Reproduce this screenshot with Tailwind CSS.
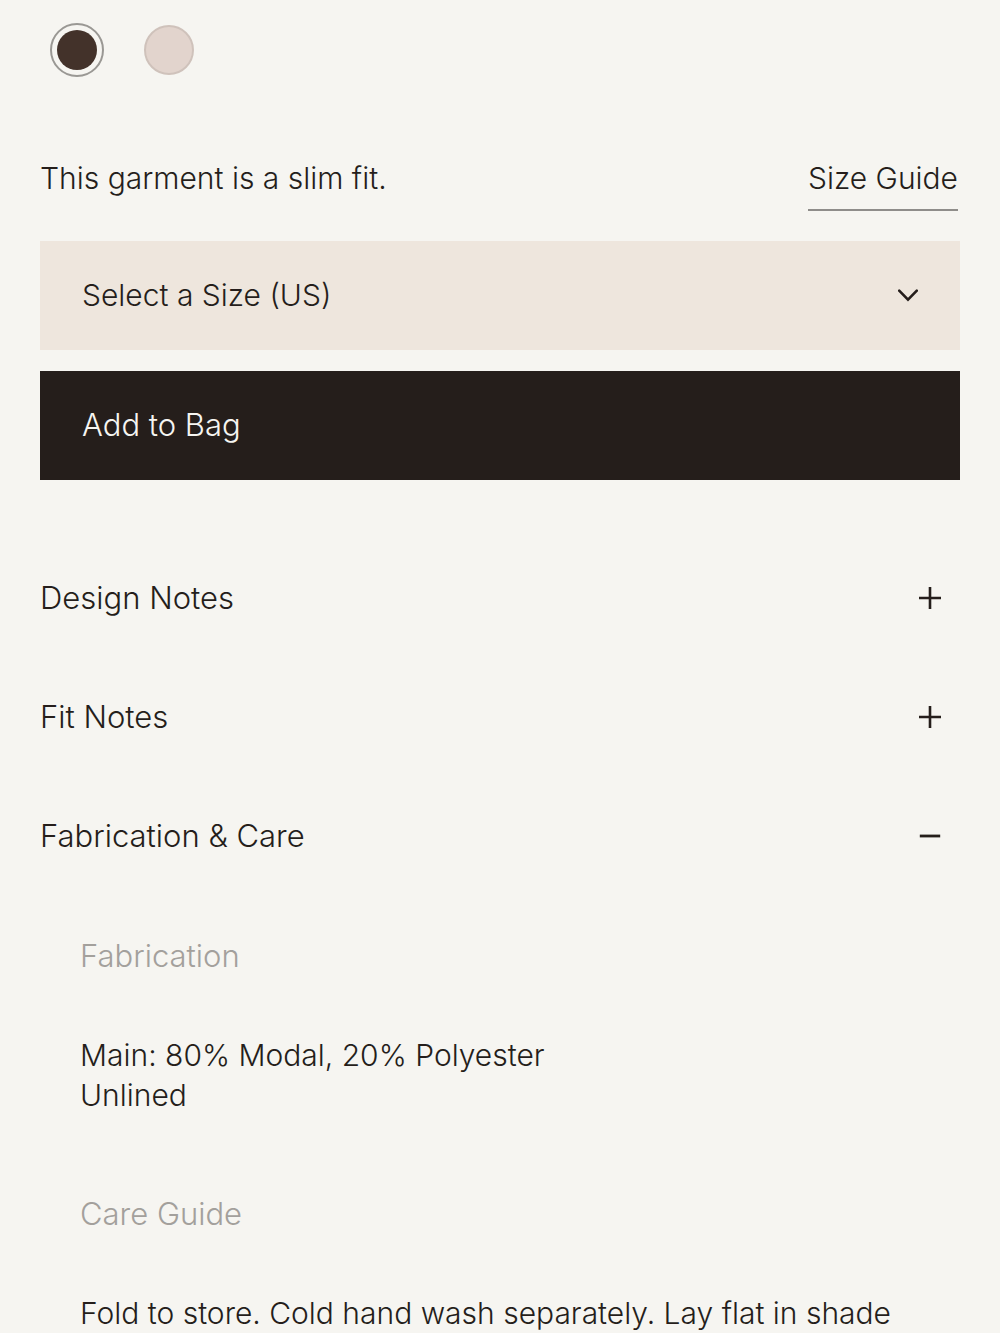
<!DOCTYPE html>
<html lang="en">
<head>
<meta charset="utf-8">
<meta name="viewport" content="width=device-width, initial-scale=1">
<title>Product options</title>
<script src="https://cdn.jsdelivr.net/npm/@tailwindcss/browser@4"></script>
</head>
<body class="bg-[#f6f5f1] text-[#251e1b] font-['Inter','Liberation_Sans',sans-serif] font-light text-[30px] leading-10">
<main class="px-10 pt-[23px]">
  <form>
    <fieldset aria-label="Colour" class="flex items-center gap-10 px-[10px]">
      <input type="radio" name="colour" aria-label="Dark brown" checked class="appearance-none size-[54px] rounded-full border-2 border-[#9a9894] bg-[#43322a] bg-clip-content p-[5px]">
      <input type="radio" name="colour" aria-label="Pale pink" class="appearance-none size-[50px] rounded-full border-2 border-[#cfc2bb] bg-[#e2d4cd]">
    </fieldset>

    <div class="mt-[81px] flex items-start justify-between pr-[2px]">
      <label for="size">This garment is a slim fit.</label>
      <a href="#size-guide" class="border-b-2 border-[#8f8d8a] pb-[11px]">Size Guide</a>
    </div>

    <div class="mt-[30px] grid">
      <select id="size" class="col-start-1 row-start-1 h-[109px] w-full appearance-none bg-[#eee6dd] px-[42px] pb-[2px]">
        <option>Select a Size (US)</option>
      </select>
      <svg class="pointer-events-none col-start-1 row-start-1 mr-[42px] h-[14px] w-5 self-center justify-self-end" viewBox="0 0 20 14" fill="none" stroke="currentColor" stroke-width="2.6" stroke-linecap="round" aria-hidden="true"><path d="M1.200 1.700 10 10.700 18.800 1.700"/></svg>
    </div>
    <button type="button" class="mt-[21px] h-[109px] w-full bg-[#251e1b] px-[42px] pb-[2px] text-left text-[31px] text-[#f6f5f1]">Add to Bag</button>
  </form>

  <section class="mt-[58px]">
    <button type="button" aria-expanded="false" class="flex h-[119px] w-full items-center justify-between pr-[19px] text-left text-[31px]">
      Design Notes
      <svg class="size-[22px]" viewBox="0 0 22 22" stroke="currentColor" stroke-width="2.600" aria-hidden="true"><path d="M0 11h22M11 0v22"/></svg>
    </button>
    <button type="button" aria-expanded="false" class="flex h-[119px] w-full items-center justify-between pr-[19px] text-left text-[31px]">
      Fit Notes
      <svg class="size-[22px]" viewBox="0 0 22 22" stroke="currentColor" stroke-width="2.600" aria-hidden="true"><path d="M0 11h22M11 0v22"/></svg>
    </button>
    <button type="button" aria-expanded="true" aria-controls="care" class="flex h-[119px] w-full items-center justify-between pr-[19px] text-left text-[31px]">
      Fabrication &amp; Care
      <svg class="size-[22px]" viewBox="0 0 22 22" stroke="currentColor" stroke-width="2.800" aria-hidden="true"><path d="M.8 11h20.400"/></svg>
    </button>
    <div id="care" class="px-10 pt-[41px]">
      <h3 class="text-[31px] text-[#a3a09c]">Fabrication</h3>
      <p class="mt-[59px]">Main: 80% Modal, 20% Polyester<br>Unlined</p>
      <h3 class="mt-[79px] text-[31px] text-[#a3a09c]">Care Guide</h3>
      <p class="mt-[59px]">Fold to store. Cold hand wash separately. Lay flat in shade</p>
    </div>
  </section>
</main>
</body>
</html>
